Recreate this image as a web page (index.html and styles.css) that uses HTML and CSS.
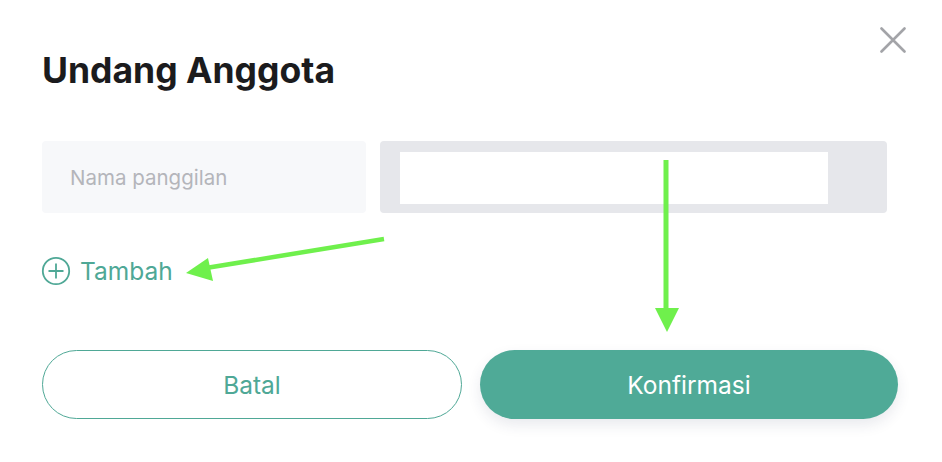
FILE: index.html
```html
<!DOCTYPE html>
<html lang="id">
<head>
<meta charset="utf-8">
<title>Undang Anggota</title>
<link rel="stylesheet" href="styles.css">
</head>
<body>
<div class="dialog">
  <button class="close" aria-label="Tutup">
    <svg width="26" height="26" viewBox="0 0 26 26"><path d="M1.5 1.5 L24.5 24.5 M24.5 1.5 L1.5 24.5" stroke="#a3a4a8" stroke-width="2.6" stroke-linecap="round" fill="none"/></svg>
  </button>
  <h1 class="title">Undang Anggota</h1>
  <div class="fields">
    <div class="field field-name"><span class="placeholder">Nama panggilan</span></div>
    <div class="field field-mail"><div class="inner"></div></div>
  </div>
  <div class="add">
    <svg class="add-icon" width="30" height="30" viewBox="0 0 30 30"><circle cx="15" cy="15" r="13.2" stroke="#4fa896" stroke-width="1.8" fill="none"/><path d="M15 7.5 V22.5 M7.5 15 H22.5" stroke="#4fa896" stroke-width="1.8" fill="none"/></svg>
    <span class="add-label">Tambah</span>
  </div>
  <div class="actions">
    <button class="btn btn-outline">Batal</button>
    <button class="btn btn-solid">Konfirmasi</button>
  </div>
  <svg class="arrows" width="942" height="462" viewBox="0 0 942 462">
    <line x1="384" y1="239" x2="206" y2="268" stroke="#6ff04c" stroke-width="4.5"/>
    <polygon points="186,273 208,258 213,281" fill="#6ff04c"/>
    <line x1="666" y1="160" x2="666" y2="312" stroke="#6ff04c" stroke-width="5"/>
    <polygon points="655,308 679,308 667,332" fill="#6ff04c"/>
  </svg>
</div>
</body>
</html>
```

FILE: styles.css
```css
* { box-sizing: border-box; }
html, body { margin: 0; padding: 0; background: #fff; }
body { font-family: Inter, "Noto Sans", sans-serif; }
.dialog { position: relative; width: 942px; height: 462px; padding: 50px 44px 0 42px; }
.close { position: absolute; left: 880px; top: 27px; width: 26px; height: 26px; padding: 0; border: 0; background: none; }
.close svg { display: block; }
.title { margin: 0; font-size: 35.5px; line-height: 42px; font-weight: 700; color: #1b1b1d; letter-spacing: 0; }
.fields { display: flex; gap: 14px; margin-top: 49px; width: 845px; }
.field { height: 72px; border-radius: 4px; }
.field-name { width: 324px; background: #f7f8fa; display: flex; align-items: center; padding-left: 28px; }
.placeholder { font-size: 20.5px; color: #b4b5ba; }
.field-mail { flex: 1; background: #e6e7eb; padding: 11px 59px 9px 20px; }
.inner { height: 52px; background: #fff; }
.add { display: flex; align-items: center; gap: 9px; margin-top: 43px; height: 30px; color: #4fa896; }
.add-icon { display: block; margin-left: -1px; }
.add-label { font-size: 24.5px; font-weight: 400; }
.actions { display: flex; gap: 18px; margin-top: 64px; }
.btn { flex: 1; height: 69px; border-radius: 35px; font-family: inherit; font-size: 24.5px; font-weight: 400; }
.btn-outline { background: #fff; border: 1px solid #4fa896; color: #4fa896; }
.btn-solid { background: #4faa97; border: 0; color: #fff; box-shadow: 0 6px 14px rgba(40, 50, 90, 0.10); }
.arrows { position: absolute; left: 0; top: 0; pointer-events: none; }
```
